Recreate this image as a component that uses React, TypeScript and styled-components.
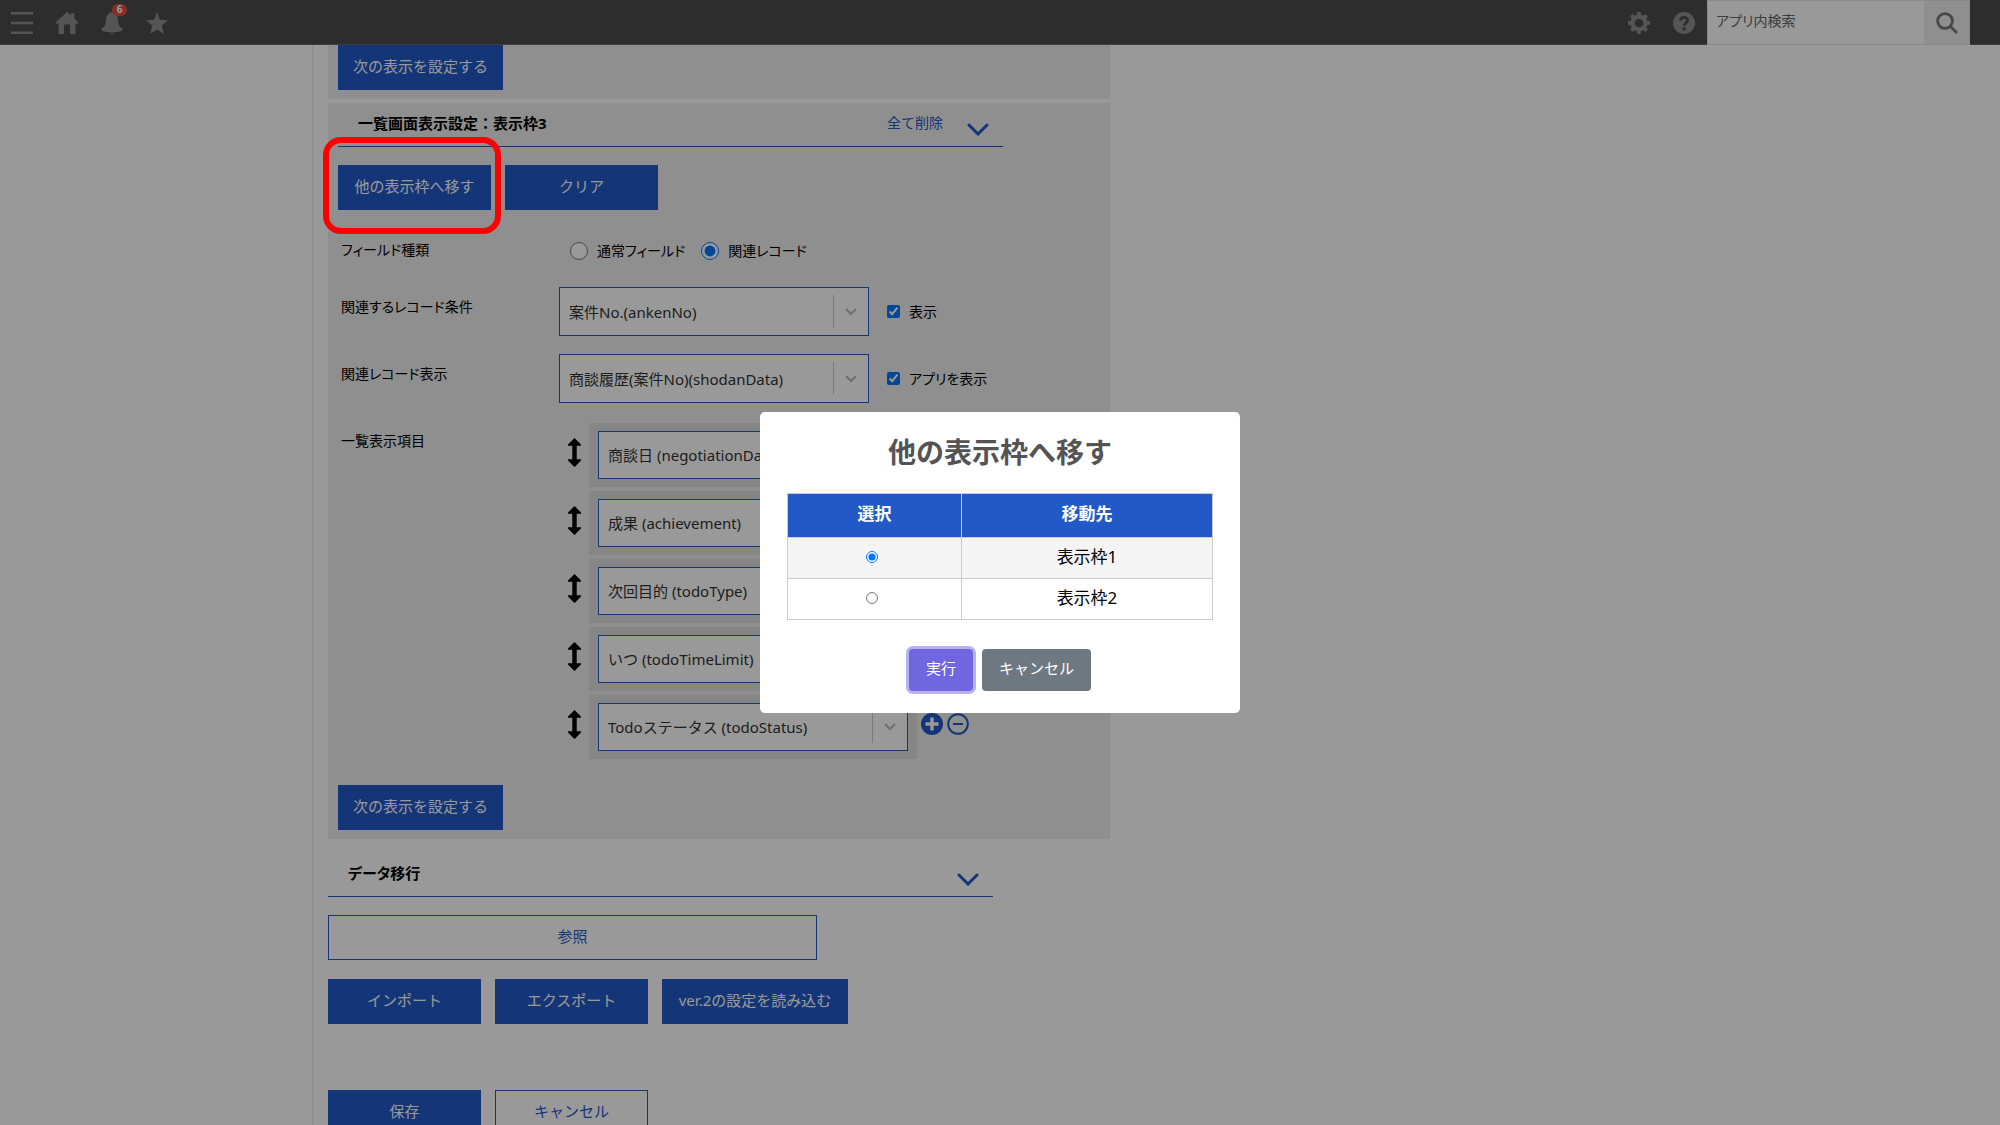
import React, { useState } from "react";
import styled, { createGlobalStyle, css } from "styled-components";

const color = {
  primary: "#2259c7",
  panel: "#eeeeee",
  item: "#e0e0e0",
  bar: "#4b4b4b",
  icon: "#8e8e8e",
};

const GlobalStyle = createGlobalStyle`
  *, *::before, *::after { box-sizing: border-box; }
  body {
    margin: 0;
    background: #fff;
    color: #000;
    font-family: "Noto Sans", "Noto Sans CJK JP", sans-serif;
    font-size: 15px;
    line-height: 22px;
  }
  button, input, select { font: inherit; }
`;

const Shell = styled.div`
  display: flex;
  flex-direction: column;
  height: 100vh;
  overflow: hidden;
`;

const TopBar = styled.header`
  flex: none;
  display: flex;
  justify-content: space-between;
  height: 45px;
  padding: 0 30px 0 0;
  background: ${color.bar};
  border-bottom: 1px solid #6a6a6a;
`;

const BarGroup = styled.div`
  display: flex;
`;

const IconButton = styled.button`
  position: relative;
  display: flex;
  align-items: center;
  justify-content: center;
  width: 45px;
  height: 45px;
  padding: 0 1px 0 0;
  border: 0;
  background: none;
  color: ${color.icon};
`;

const Badge = styled.span`
  position: absolute;
  top: 4px;
  right: 8px;
  width: 15px;
  height: 12px;
  border-radius: 6px;
  background: #e74c3c;
  color: #fff;
  font-size: 10px;
  font-weight: 700;
  line-height: 11px;
  text-align: center;
`;

const Search = styled.form`
  display: flex;
  width: 263px;
  height: 45px;
  border: 1px solid #e3e7e8;
  background: #fff;
`;

const SearchInput = styled.input`
  flex: 1;
  min-width: 0;
  padding: 0 8px 4px;
  border: 0;
  background: none;
  font-size: 14px;
  font-feature-settings: "palt";
  &::placeholder { color: #666; opacity: 1; }
`;

const SearchButton = styled.button`
  display: flex;
  align-items: center;
  justify-content: center;
  width: 45px;
  padding: 0;
  border: 0;
  background: ${color.panel};
  color: #777;
`;

const Scroller = styled.main`
  flex: 1;
  min-height: 0;
  margin-left: 312px;
  padding: 0 14px;
  border-left: 2px solid #f0f0f0;
  overflow-y: auto;
  scrollbar-width: none;
`;

const Column = styled.div`
  display: flex;
  flex-direction: column;
  max-width: 782px;
`;

const Card = styled.section`
  padding: 0 10px 9px;
  margin-bottom: 4px;
  background: ${color.panel};
`;

const SectionHead = styled.div`
  display: flex;
  align-items: center;
  gap: 24px;
  height: 44px;
  max-width: 665px;
  margin-bottom: 18px;
  padding: 0 14px 3px 20px;
  border-bottom: 1px solid ${color.primary};
`;

const SectionTitle = styled.h2<{ $compact?: boolean }>`
  flex: 1;
  margin: 0;
  font-size: 15px;
  font-weight: 700;
  ${(p) => p.$compact && css`font-feature-settings: "palt";`}
`;

const ClearLink = styled.a`
  color: ${color.primary};
  font-size: 14px;
  text-decoration: none;
`;

const Collapse = styled.button`
  display: flex;
  padding: 12px 0 0;
  border: 0;
  background: none;
  color: ${color.primary};
`;

const ButtonRow = styled.div`
  display: flex;
  gap: 14px;
`;

const DataSection = styled.section`
  margin-top: 10px;
  ${ButtonRow} + ${ButtonRow} { margin-top: 19px; }
`;

const SaveRow = styled(ButtonRow)`
  margin-top: 66px;
  padding-bottom: 40px;
`;

const Button = styled.button<{ $outline?: boolean; $minWidth?: number }>`
  flex: none;
  min-width: ${(p) => p.$minWidth ?? 153}px;
  height: 45px;
  padding: 0 14px 3px;
  border: 1px solid ${color.primary};
  background: ${(p) => (p.$outline ? "#fff" : color.primary)};
  color: ${(p) => (p.$outline ? color.primary : "#fff")};
`;

const MarkedButton = styled.div`
  position: relative;
  display: flex;
`;

const Marker = styled.span`
  position: absolute;
  z-index: 20;
  top: -28px;
  right: -10px;
  bottom: -24px;
  left: -15px;
  border: 6px solid #ff0000;
  border-radius: 18px;
  pointer-events: none;
`;

const Fields = styled.div`
  display: flex;
  flex-direction: column;
  gap: 18px;
  margin: 20px 0 26px;
`;

const Field = styled.div`
  display: grid;
  grid-template-columns: 221px 1fr;
  min-height: 39px;
`;

const FieldLabel = styled.label`
  padding: 9px 3px 0;
  font-size: 14px;
  font-feature-settings: "palt";
`;

const Controls = styled.div`
  display: flex;
  align-items: center;
  gap: 18px;
`;

const Choice = styled.label`
  display: flex;
  align-items: center;
  gap: 9px;
  font-size: 14px;
  font-feature-settings: "palt";
`;

const Radios = styled.div`
  display: flex;
  gap: 16px;
  padding: 3px 0 0 11px;
`;

const Radio = styled.input`
  width: 18px;
  height: 18px;
  margin: 0;
`;

const Check = styled.input`
  width: 13px;
  height: 13px;
  margin: 0;
`;

const SelectBox = styled.div<{ $height: number }>`
  position: relative;
  flex: none;
  width: 310px;
  height: ${(p) => p.$height}px;
`;

const Select = styled.select`
  appearance: none;
  width: 100%;
  height: 100%;
  padding: 0 44px 0 9px;
  border: 1px solid ${color.primary};
  border-radius: 0;
  background: #fff;
  color: #333;
`;

const SelectMark = styled.span`
  position: absolute;
  top: 8px;
  right: 1px;
  bottom: 8px;
  display: flex;
  align-items: center;
  justify-content: center;
  width: 35px;
  border-left: 1px solid #ccc;
  color: #bbb;
  pointer-events: none;
`;

const ItemList = styled.ul`
  display: flex;
  flex-direction: column;
  gap: 4px;
  margin: 0;
  padding: 2px 0 0 9px;
  list-style: none;
`;

const Item = styled.li`
  display: flex;
  align-items: center;
`;

const Handle = styled.span`
  display: flex;
  width: 21px;
  padding-bottom: 6px;
`;

const ItemBox = styled.div`
  padding: 8px 9px;
  background: ${color.item};
`;

const ItemButton = styled.button`
  display: flex;
  margin: 0 0 6px 4px;
  padding: 0;
  border: 0;
  background: none;
  color: ${color.primary};
`;

const Overlay = styled.div`
  position: fixed;
  z-index: 10;
  inset: 0;
  display: flex;
  align-items: center;
  justify-content: center;
  background: rgba(0, 0, 0, 0.4);
`;

const Dialog = styled.div`
  width: 480px;
  max-width: 100%;
  padding: 19px 27px 22px;
  border-radius: 5px;
  background: #fff;
`;

const DialogTitle = styled.h1`
  margin: 0 0 20px;
  color: #545454;
  font-size: 28px;
  font-weight: 700;
  line-height: 42px;
  text-align: center;
`;

const Table = styled.table`
  width: 100%;
  border-collapse: collapse;
  font-size: 17px;
  text-align: center;
`;

const HeadCell = styled.th<{ $width?: number }>`
  width: ${(p) => (p.$width ? `${p.$width}px` : "auto")};
  height: 44px;
  padding: 0 0 3px;
  border: 1px solid #ccc;
  background: ${color.primary};
  color: #fff;
`;

const Row = styled.tr`
  &:nth-child(odd) { background: #f4f4f4; }
`;

const Cell = styled.td<{ $choice?: boolean }>`
  height: 41px;
  padding: 0 ${(p) => (p.$choice ? 6 : 0)}px 2px 0;
  border: 1px solid #ccc;
`;

const TargetRadio = styled.input`
  width: 12px;
  height: 12px;
  margin: 0;
`;

const DialogActions = styled.div`
  display: flex;
  justify-content: center;
  gap: 9px;
  margin-top: 29px;
`;

const DialogButton = styled.button<{ $primary?: boolean }>`
  height: 42px;
  padding: 0 17px 4px;
  border: 0;
  border-radius: 4px;
  background: ${(p) => (p.$primary ? "#7066e0" : "#6e7881")};
  box-shadow: ${(p) => (p.$primary ? "0 0 0 3px rgba(112, 102, 224, 0.5)" : "none")};
  color: #fff;
`;

const Chevron = () => (
  <svg width="22" height="13" viewBox="0 0 22 13" fill="none" stroke="currentColor" strokeWidth="3" strokeLinecap="round">
    <path d="M2 2l9 9 9-9" />
  </svg>
);

const Arrow = () => (
  <svg width="13" height="29" viewBox="0 0 13 29" fill="#000">
    <path d="M6.5 0L13 6.500v1.300H8.700v13.400H13v1.300L6.500 29 0 22.500v-1.300h4.300V7.800H0V6.500z" />
  </svg>
);

interface DropdownProps {
  id?: string;
  value: string;
  label?: string;
  height?: number;
}

function Dropdown({ id, value, label, height = 49 }: DropdownProps) {
  return (
    <SelectBox $height={height}>
      <Select id={id} aria-label={label} defaultValue={value}>
        <option>{value}</option>
      </Select>
      <SelectMark>
        <svg width="12" height="8" viewBox="0 0 12 8" fill="none" stroke="currentColor" strokeWidth="2" strokeLinecap="round">
          <path d="M1.500 1.500L6 6l4.500-4.500" />
        </svg>
      </SelectMark>
    </SelectBox>
  );
}

const items = [
  "商談日 (negotiationDate)",
  "成果 (achievement)",
  "次回目的 (todoType)",
  "いつ (todoTimeLimit)",
  "Todoステータス (todoStatus)",
];

const targets = ["表示枠1", "表示枠2"];

function Header() {
  return (
    <TopBar>
      <BarGroup>
        <IconButton aria-label="メニュー">
          <svg width="22" height="22" viewBox="0 0 22 22" fill="currentColor">
            <path d="M0 0h22v2.600H0zM0 9.700h22v2.600H0zM0 19.400h22V22H0z" />
          </svg>
        </IconButton>
        <IconButton aria-label="ホーム">
          <svg width="22" height="22" viewBox="0 0 22 22" fill="currentColor">
            <path d="M11 0l4 3.600V1.200h3.300v5.300L22 10v1.400h-2.500V22h-5.400v-9.600H8V22H2.500V11.400H0V10z" />
          </svg>
        </IconButton>
        <IconButton aria-label="通知">
          <svg width="22" height="22" viewBox="0 0 22 22" fill="currentColor">
            <path d="M11 0C7 1 5.300 4 5 8c-.300 5-1.500 7-5 9 .500 2 4 3.300 11 3.300S21.500 19 22 17c-3.500-2-4.700-4-5-9-.300-4-2-7-6-8zM8.500 21h5c-.500 1.300-4.500 1.300-5 0z" />
          </svg>
          <Badge>6</Badge>
        </IconButton>
        <IconButton aria-label="お気に入り">
          <svg width="22" height="22" viewBox="0 0 22 22" fill="currentColor">
            <path d="M11 0l2.900 7.800L22 8.400l-6.300 5.200L17.800 22 11 17.400 4.200 22l2.100-8.400L0 8.400l8.100-.600z" />
          </svg>
        </IconButton>
      </BarGroup>
      <BarGroup>
        <IconButton aria-label="設定">
          <svg width="22" height="22" viewBox="0 0 22 22">
            <g fill="currentColor">
              <circle cx="11" cy="11" r="8.500" />
              {[0, 45, 90, 135].map((angle) => (
                <rect key={angle} x="9" y="0" width="4" height="22" rx="1" transform={`rotate(${angle} 11 11)`} />
              ))}
            </g>
            <circle cx="11" cy="11" r="4.300" fill={color.bar} />
          </svg>
        </IconButton>
        <IconButton aria-label="ヘルプ">
          <svg width="22" height="22" viewBox="0 0 22 22">
            <circle cx="11" cy="11" r="11" fill="currentColor" />
            <path d="M7.600 8.600C7.600 4.300 14.600 4.300 14.600 8.300c0 2.700-3.500 2.700-3.500 5.500" fill="none" stroke={color.bar} strokeWidth="2.800" />
            <rect x="9.600" y="15.300" width="3" height="3" fill={color.bar} />
          </svg>
        </IconButton>
        <Search>
          <SearchInput aria-label="アプリ内検索" placeholder="アプリ内検索" />
          <SearchButton type="button" aria-label="検索">
            <svg width="22" height="22" viewBox="0 0 22 22" fill="none" stroke="currentColor" strokeWidth="2.800">
              <circle cx="9" cy="9" r="7.400" />
              <path d="M14 14l7 7" />
            </svg>
          </SearchButton>
        </Search>
      </BarGroup>
    </TopBar>
  );
}

function MoveDialog() {
  const [target, setTarget] = useState(targets[0]);
  return (
    <Overlay>
      <Dialog role="dialog" aria-modal="true" aria-labelledby="move-title">
        <DialogTitle id="move-title">他の表示枠へ移す</DialogTitle>
        <Table>
          <thead>
            <tr>
              <HeadCell $width={174}>選択</HeadCell>
              <HeadCell>移動先</HeadCell>
            </tr>
          </thead>
          <tbody>
            {targets.map((name, i) => (
              <Row key={name}>
                <Cell $choice>
                  <TargetRadio
                    type="radio"
                    name="target"
                    id={`target-${i}`}
                    checked={target === name}
                    onChange={() => setTarget(name)}
                  />
                </Cell>
                <Cell>
                  <label htmlFor={`target-${i}`}>{name}</label>
                </Cell>
              </Row>
            ))}
          </tbody>
        </Table>
        <DialogActions>
          <DialogButton $primary>実行</DialogButton>
          <DialogButton>キャンセル</DialogButton>
        </DialogActions>
      </Dialog>
    </Overlay>
  );
}

export default function App() {
  return (
    <Shell>
      <GlobalStyle />
      <Header />
      <Scroller>
        <Column>
          <Card>
            <Button>次の表示を設定する</Button>
          </Card>
          <Card>
            <SectionHead>
              <SectionTitle>一覧画面表示設定：表示枠3</SectionTitle>
              <ClearLink href="#">全て削除</ClearLink>
              <Collapse aria-label="折りたたむ"><Chevron /></Collapse>
            </SectionHead>
            <ButtonRow>
              <MarkedButton>
                <Button>他の表示枠へ移す</Button>
                <Marker />
              </MarkedButton>
              <Button>クリア</Button>
            </ButtonRow>
            <Fields>
              <Field>
                <FieldLabel as="span">フィールド種類</FieldLabel>
                <Radios>
                  <Choice>
                    <Radio type="radio" name="kind" />
                    通常フィールド
                  </Choice>
                  <Choice>
                    <Radio type="radio" name="kind" defaultChecked />
                    関連レコード
                  </Choice>
                </Radios>
              </Field>
              <Field>
                <FieldLabel htmlFor="condition">関連するレコード条件</FieldLabel>
                <Controls>
                  <Dropdown id="condition" value="案件No.(ankenNo)" />
                  <Choice>
                    <Check type="checkbox" defaultChecked />
                    表示
                  </Choice>
                </Controls>
              </Field>
              <Field>
                <FieldLabel htmlFor="related">関連レコード表示</FieldLabel>
                <Controls>
                  <Dropdown id="related" value="商談履歴(案件No)(shodanData)" />
                  <Choice>
                    <Check type="checkbox" defaultChecked />
                    アプリを表示
                  </Choice>
                </Controls>
              </Field>
              <Field>
                <FieldLabel as="span">一覧表示項目</FieldLabel>
                <ItemList>
                  {items.map((name) => (
                    <Item key={name}>
                      <Handle><Arrow /></Handle>
                      <ItemBox>
                        <Dropdown value={name} label="一覧表示項目" height={48} />
                      </ItemBox>
                      <ItemButton aria-label="追加">
                        <svg width="22" height="22" viewBox="0 0 22 22">
                          <circle cx="11" cy="11" r="11" fill="currentColor" />
                          <path d="M11 4.500v13M4.500 11h13" stroke="#fff" strokeWidth="3.400" />
                        </svg>
                      </ItemButton>
                      <ItemButton aria-label="削除">
                        <svg width="22" height="22" viewBox="0 0 22 22" fill="none" stroke="currentColor" strokeWidth="2">
                          <circle cx="11" cy="11" r="9.800" />
                          <path d="M6 11h10" />
                        </svg>
                      </ItemButton>
                    </Item>
                  ))}
                </ItemList>
              </Field>
            </Fields>
            <Button>次の表示を設定する</Button>
          </Card>
          <DataSection>
            <SectionHead>
              <SectionTitle $compact>データ移行</SectionTitle>
              <Collapse aria-label="折りたたむ"><Chevron /></Collapse>
            </SectionHead>
            <ButtonRow>
              <Button $outline $minWidth={489}>参照</Button>
            </ButtonRow>
            <ButtonRow>
              <Button>インポート</Button>
              <Button>エクスポート</Button>
              <Button $minWidth={186}>ver.2の設定を読み込む</Button>
            </ButtonRow>
          </DataSection>
          <SaveRow>
            <Button>保存</Button>
            <Button $outline>キャンセル</Button>
          </SaveRow>
        </Column>
      </Scroller>
      <MoveDialog />
    </Shell>
  );
}
